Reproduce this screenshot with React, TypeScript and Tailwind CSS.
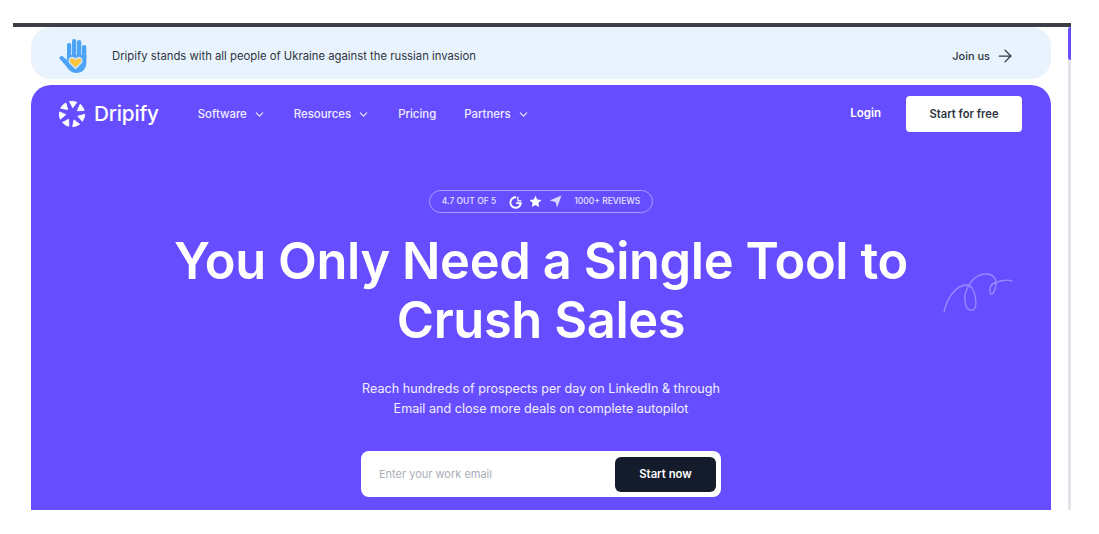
import { ChevronDown, ArrowRight } from 'lucide-react';

const NAV = [
  { label: 'Software', menu: true },
  { label: 'Resources', menu: true },
  { label: 'Pricing', menu: false },
  { label: 'Partners', menu: true },
];

const BLADES = [0, 1, 2, 3, 4, 5, 6];

function HandIcon() {
  return (
    <svg width="28" height="34" viewBox="0 0 28 34">
      <g fill="#4da3f5">
        <rect x="8" y="4" width="4.300" height="18" rx="2.100" />
        <rect x="13" y="0" width="4.300" height="22" rx="2.100" />
        <rect x="18" y="1" width="4.300" height="21" rx="2.100" />
        <rect x="23" y="6" width="4.300" height="16" rx="2.100" />
        <path d="M8 16H27.300V24C27.300 30 23 34 17.500 34 12 34 9.500 30.500 7 27L.8 20C-.5 18 2 16 4 17.500L8 21z" />
      </g>
      <path
        d="M16.500 29.500 11 24C8 20.500 12.500 16 16.500 20.300 20.500 16 25 20.500 22 24z"
        fill="#fbc63d"
        stroke="#cfe5fb"
        strokeWidth="1.400"
      />
    </svg>
  );
}

function Logo() {
  return (
    <svg width="28" height="28" viewBox="0 0 28 28" fill="#fff" stroke="#fff" strokeWidth="0.8" strokeLinejoin="round">
      {BLADES.map((i) => (
        <path
          key={i}
          d="M11.500 1.500A12.800 12.800 0 0 1 18.800 2.300L14.800 7.800z"
          transform={`rotate(${(i * 360) / 7} 14 14)`}
        />
      ))}
    </svg>
  );
}

function Squiggle() {
  return (
    <svg width="70" height="42" viewBox="0 0 70 42" fill="none" className="absolute right-[38px] top-[187px]">
      <path
        d="M1 40C4 26 13 13 24 13 30 13 33 24 33 31 33 37 30 39 27 38 22 37 20 25 24 17 28 8 35 2 43 2 51 2 55 8 52 17 50 23 47 24 47 19 46 13 52 10 58 9 62 8 66 8 69 9"
        stroke="#9a8cff"
        strokeWidth="1.300"
        strokeLinecap="round"
      />
    </svg>
  );
}

export default function App() {
  return (
    <div className="w-[1099px] h-[534px] bg-white pt-[23px] pl-[13px] font-['Inter',sans-serif] overflow-hidden">
      <div className="relative w-[1058px] h-[487px] border-t-4 border-[#3b3e46] pl-[18px] overflow-hidden">
        <div className="w-[1020px] h-[52px] bg-[#e8f3fe] rounded-[20px] flex items-center pt-[6px] pl-[28px] pr-[36px]">
          <HandIcon />
          <span className="ml-[25px] text-[11.300px] text-[#2f3440]">
            Dripify stands with all people of Ukraine against the russian invasion
          </span>
          <span className="ml-auto text-[11px] font-medium text-[#2f3440]">Join us</span>
          <ArrowRight size={20} strokeWidth={1.500} className="ml-[5px] text-[#2f3440]" />
        </div>

        <div className="relative mt-[6px] w-[1020px] h-[425px] bg-[#664dff] rounded-t-[20px] text-white">
          <header className="h-[58px] flex items-center pl-[27px] pr-[29px]">
            <Logo />
            <span className="ml-[8px] text-[20.700px] font-medium leading-none tracking-[-0.2px]">Dripify</span>
            <nav className="ml-[39px] mt-[1px] flex items-center gap-[28px]">
              {NAV.map((n) => (
                <span key={n.label} className="flex items-center text-[11.400px] font-medium text-[#f0edff]">
                  {n.label}
                  {n.menu && <ChevronDown size={13} strokeWidth={2} className="ml-[6px]" />}
                </span>
              ))}
            </nav>
            <span className="ml-auto text-[11.500px] font-semibold">Login</span>
            <button className="ml-[25px] w-[116px] h-[36px] bg-white rounded-[4px] text-[11.200px] font-semibold text-[#2f3440]">
              Start for free
            </button>
          </header>

          <Squiggle />

          <div className="flex flex-col items-center">
            <div className="mt-[47px] w-[224px] h-[23px] rounded-full border border-[#a79bff] flex items-center justify-center text-[8.500px] font-medium text-[#e8e4ff]">
              <span>4.7 OUT OF 5</span>
              <svg width="14" height="14" viewBox="0 0 24 24" fill="none" className="ml-[12px]">
                <path d="M14 4a9 9 0 1 0 8 10h-8" stroke="#fff" strokeWidth="3.200" />
                <path d="M17 3v7h6" stroke="#fff" strokeWidth="2" />
              </svg>
              <svg width="13" height="13" viewBox="0 0 24 24" fill="#fff" className="ml-[7px]">
                <path d="m12 1.500 3.200 7 7.800.9-5.800 5.200 1.600 7.700L12 18.400l-6.800 3.900 1.600-7.700L1 9.400l7.800-.9z" />
              </svg>
              <svg width="13" height="13" viewBox="0 0 24 24" className="ml-[7px]">
                <path d="M1 10 23 1 15 23l-3-10z" fill="#dcd6ff" />
              </svg>
              <span className="ml-[12px]">1000+ REVIEWS</span>
            </div>

            <h1 className="mt-[18px] text-center text-[50.600px] font-semibold leading-[59px] tracking-[-0.4px]">
              You Only Need a Single Tool to
              <br />
              Crush Sales
            </h1>

            <p className="mt-[30px] text-center text-[12.600px] leading-[20px] text-[#f0edff]">
              Reach hundreds of prospects per day on LinkedIn &amp; through
              <br />
              Email and close more deals on complete autopilot
            </p>

            <div className="mt-[32px] w-[360px] h-[46px] bg-white rounded-[8px] flex items-center pl-[18px] pr-[5px]">
              <span className="text-[11px] text-[#a9adb8]">Enter your work email</span>
              <button className="ml-auto w-[101px] h-[35px] bg-[#141b2b] rounded-[6px] text-[11.300px] font-semibold text-white">
                Start now
              </button>
            </div>
          </div>
        </div>

        <div className="absolute right-0 top-0 h-full w-[3px] bg-[#e2e2e8]">
          <div className="h-[33px] bg-[#664dff] rounded-l-[3px]" />
        </div>
      </div>
    </div>
  );
}
